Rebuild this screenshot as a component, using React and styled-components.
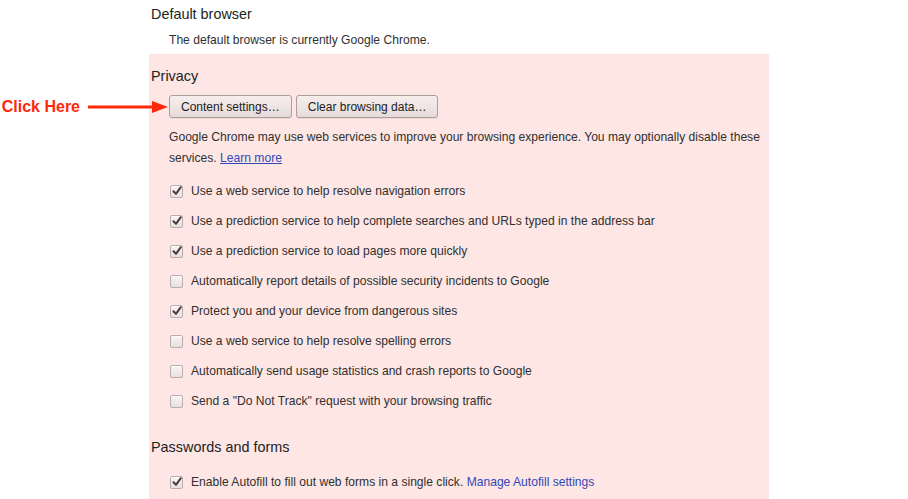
import React from "react";
import styled, { createGlobalStyle } from "styled-components";

const GlobalStyle = createGlobalStyle`
  body {
    margin: 0;
    background: #ffffff;
    font-family: "Liberation Sans", Arial, sans-serif;
    color: #303030;
  }
`;

const Viewport = styled.div`
  width: 100%;
  height: 499px;
  overflow: hidden;
`;

const Page = styled.div`
  display: flex;
  flex-direction: column;
  width: 620px;
  height: 100%;
  margin-left: 149px;
`;

const TopSection = styled.div`
  display: flex;
  flex-direction: column;
  padding: 5px 0 5px 2px;
`;

const PinkSection = styled.div`
  display: flex;
  flex-direction: column;
  flex: 1;
  background: #fde6e4;
  padding: 13px 0 0 2px;
`;

const Heading = styled.h3`
  margin: 0;
  font-size: 14.4px;
  font-weight: normal;
  line-height: 18px;
  color: #222;
  margin-top: ${(p) => p.$top || 0}px;
`;

const Indent = styled.div`
  display: flex;
  flex-direction: column;
  padding-left: 18px;
  margin-top: ${(p) => p.$top || 0}px;
`;

const Text = styled.p`
  margin: 0;
  font-size: 12.1px;
  line-height: ${(p) => p.$lh || 18}px;
  color: #303030;
  max-width: 598px;
`;

const ButtonRow = styled.div`
  position: relative;
  display: flex;
  gap: 4px;
  margin-top: 10px;
  margin-left: 18px;
`;

const Button = styled.button`
  height: 23px;
  padding: 0 11px;
  border: 1px solid #a99e9e;
  border-radius: 3px;
  background: linear-gradient(#f6eeed, #e6dbda);
  box-shadow: 0 1px 0 rgba(0, 0, 0, 0.06);
  font-family: "Liberation Sans", Arial, sans-serif;
  font-size: 12px;
  color: #222;
  cursor: pointer;
`;

const Callout = styled.div`
  position: absolute;
  right: calc(100% + 1px);
  top: 0;
  height: 23px;
  display: flex;
  align-items: center;
  gap: 8px;
  white-space: nowrap;
`;

const CalloutText = styled.span`
  font-family: "Liberation Sans", Arial, sans-serif;
  font-weight: bold;
  font-size: 16px;
  color: #fc2a0a;
`;

const Link = styled.a`
  color: #3248b8;
  text-decoration: ${(p) => (p.$underline ? "underline" : "none")};
  cursor: pointer;
`;

const CheckList = styled.div`
  display: flex;
  flex-direction: column;
  margin-top: ${(p) => p.$top || 0}px;
  margin-left: 18px;
`;

const Row = styled.label`
  display: flex;
  align-items: center;
  height: 30px;
  gap: 8px;
  font-size: 12.1px;
  color: #303030;
`;

const Box = styled.span`
  display: inline-flex;
  align-items: center;
  justify-content: center;
  width: 11px;
  height: 11px;
  border: 1px solid #b8adad;
  border-radius: 2px;
  background: linear-gradient(#fbf4f4, #e9dfdf);
  box-shadow: inset 0 1px 0 rgba(255, 255, 255, 0.7);
  margin-left: 1px;
`;

function Arrow() {
  return (
    <svg width="80" height="14" viewBox="0 0 80 14">
      <rect x="0" y="5.5" width="68" height="3" fill="#fc2a0a" />
      <polygon points="64,1 80,7 64,13" fill="#fc2a0a" />
    </svg>
  );
}

function Check({ checked }) {
  return (
    <Box>
      {checked && (
        <svg width="10" height="10" viewBox="0 0 10 10">
          <path
            d="M1.5 5.2 L4 7.8 L8.8 1.2"
            fill="none"
            stroke="#4b3b3b"
            strokeWidth="2"
            strokeLinecap="round"
            strokeLinejoin="round"
          />
        </svg>
      )}
    </Box>
  );
}

const privacyOptions = [
  { label: "Use a web service to help resolve navigation errors", checked: true },
  { label: "Use a prediction service to help complete searches and URLs typed in the address bar", checked: true },
  { label: "Use a prediction service to load pages more quickly", checked: true },
  { label: "Automatically report details of possible security incidents to Google", checked: false },
  { label: "Protect you and your device from dangerous sites", checked: true },
  { label: "Use a web service to help resolve spelling errors", checked: false },
  { label: "Automatically send usage statistics and crash reports to Google", checked: false },
  { label: "Send a \"Do Not Track\" request with your browsing traffic", checked: false },
];

export default function App() {
  return (
    <>
      <GlobalStyle />
      <Viewport>
        <Page>
          <TopSection>
            <Heading>Default browser</Heading>
            <Indent $top={8}>
              <Text>The default browser is currently Google Chrome.</Text>
            </Indent>
          </TopSection>

          <PinkSection>
            <Heading>Privacy</Heading>
            <ButtonRow>
              <Callout>
                <CalloutText>Click Here</CalloutText>
                <Arrow />
              </Callout>
              <Button>Content settings…</Button>
              <Button>Clear browsing data…</Button>
            </ButtonRow>
            <Indent $top={9}>
              <Text $lh={21}>
                Google Chrome may use web services to improve your browsing experience. You may
                optionally disable these services. <Link $underline>Learn more</Link>
              </Text>
            </Indent>
            <CheckList $top={7}>
              {privacyOptions.map((o) => (
                <Row key={o.label}>
                  <Check checked={o.checked} />
                  {o.label}
                </Row>
              ))}
            </CheckList>

            <Heading $top={22}>Passwords and forms</Heading>
            <CheckList $top={11}>
              <Row>
                <Check checked />
                <span>
                  Enable Autofill to fill out web forms in a single click.{" "}
                  <Link>Manage Autofill settings</Link>
                </span>
              </Row>
            </CheckList>
          </PinkSection>
        </Page>
      </Viewport>
    </>
  );
}
